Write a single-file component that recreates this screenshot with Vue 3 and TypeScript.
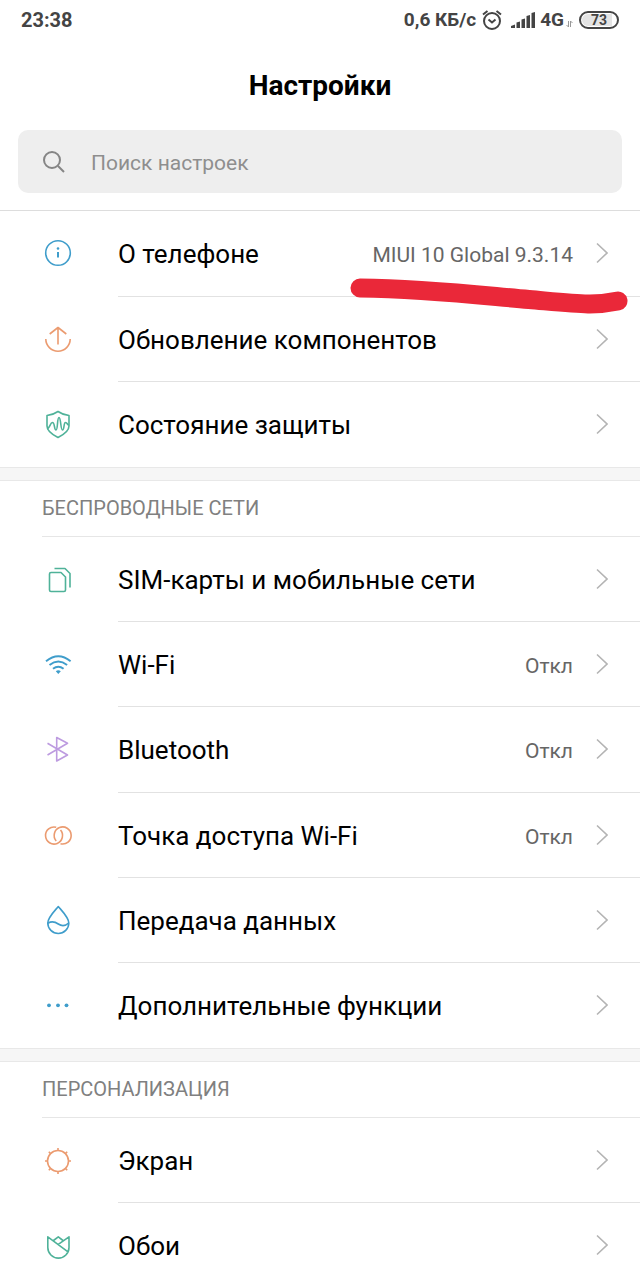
<script setup lang="ts">
type IconName =
  | 'info' | 'update' | 'shield' | 'sim' | 'wifi' | 'bluetooth'
  | 'hotspot' | 'data' | 'more' | 'display' | 'wallpaper'

interface Item {
  icon: IconName
  label: string
  value?: string
  marked?: boolean
}

interface Group {
  id: string
  title?: string
  items: Item[]
}

const groups: Group[] = [
  {
    id: 'device',
    items: [
      { icon: 'info', label: 'О телефоне', value: 'MIUI 10 Global 9.3.14', marked: true },
      { icon: 'update', label: 'Обновление компонентов' },
      { icon: 'shield', label: 'Состояние защиты' },
    ],
  },
  {
    id: 'wireless',
    title: 'БЕСПРОВОДНЫЕ СЕТИ',
    items: [
      { icon: 'sim', label: 'SIM-карты и мобильные сети' },
      { icon: 'wifi', label: 'Wi-Fi', value: 'Откл' },
      { icon: 'bluetooth', label: 'Bluetooth', value: 'Откл' },
      { icon: 'hotspot', label: 'Точка доступа Wi-Fi', value: 'Откл' },
      { icon: 'data', label: 'Передача данных' },
      { icon: 'more', label: 'Дополнительные функции' },
    ],
  },
  {
    id: 'personal',
    title: 'ПЕРСОНАЛИЗАЦИЯ',
    items: [
      { icon: 'display', label: 'Экран' },
      { icon: 'wallpaper', label: 'Обои' },
    ],
  },
]
</script>

<template>
  <div class="screen">
    <div class="status">
      <span class="clock">23:38</span>
      <span class="speed">0,6 КБ/с</span>
      <svg class="alarm" viewBox="0 0 20 22" aria-hidden="true">
        <circle cx="10" cy="12" r="8" />
        <path d="M6.5 10.5 10 13.5 13.5 10.5M1 5.5 5.5 2M19 5.5 14.5 2" />
      </svg>
      <svg class="signal" viewBox="0 0 24 18" aria-hidden="true">
        <path d="M0 17V15L4 13.500V17ZM5.500 17V11.500L9 10.500V17ZM10.500 17V8.500L14 7.500V17ZM15.500 17V5L19 4V17ZM20.500 17V2L24 1V17Z" />
      </svg>
      <span class="net">4G</span>
      <svg class="arrows" viewBox="0 0 7 8" aria-hidden="true">
        <path d="M2.500 1V7L.5 5M4.500 7V1L6.500 3" />
      </svg>
      <span class="battery"><span class="level">73</span></span>
    </div>

    <h1>Настройки</h1>

    <label class="search">
      <svg viewBox="0 0 24 24" aria-hidden="true">
        <circle cx="10" cy="10" r="8" />
        <path d="M16 16 22 22" />
      </svg>
      <input type="search" placeholder="Поиск настроек" aria-label="Поиск настроек">
    </label>

    <main class="list">
      <section v-for="group in groups" :key="group.id" class="group">
        <h2 v-if="group.title">{{ group.title }}</h2>
        <ul>
          <li v-for="item in group.items" :key="item.icon">
            <a href="#" class="row">
              <svg class="icon" :class="item.icon" viewBox="0 0 32 32" aria-hidden="true">
                <template v-if="item.icon === 'info'">
                  <circle cx="16" cy="16" r="12.300" />
                  <path d="M16 15V20.500" stroke-width="2" />
                  <circle class="solid" cx="16" cy="11.500" r="1.300" />
                </template>
                <path v-else-if="item.icon === 'update'" d="M3.800 16A12.200 12.200 0 0 0 28.200 16M16 21.500V4.500M7.700 11 16 4.500 24.300 11" />
                <template v-else-if="item.icon === 'shield'">
                  <path d="M16 3.500C19.500 6 23 7 27 7.500V18C27 23 22 26.500 16 29.500 10 26.500 5 23 5 18V7.500C9 7 12.500 6 16 3.500Z" />
                  <path d="M5 20.500C8 20.500 8 14.500 10.500 14.500S12 22 14 22 15 9.500 17 9.500 18.500 22 20.500 22 21.500 14.500 23.500 14.500 25 17 27 17" />
                </template>
                <template v-else-if="item.icon === 'sim'">
                  <path d="M9 9.500H19L23.500 14V27Q23.500 28.500 22 28.500H9Q7.500 28.500 7.500 27V11Q7.500 9.500 9 9.500Z" />
                  <path d="M12.500 5.500H23L28 10.500V24.500" />
                </template>
                <template v-else-if="item.icon === 'wifi'">
                  <path d="M4 13.300Q16.300 3.300 28.600 13.300M7.500 17Q16.300 10 25.100 17M11 20.800Q16.300 16.500 21.600 20.800" stroke-width="1.900" />
                  <path class="solid" d="M13.800 23.300Q16.300 21.300 18.800 23.300L16.300 26Z" />
                </template>
                <path v-else-if="item.icon === 'bluetooth'" d="M5.500 10.300 25.500 22 14.700 28V4.500L25.500 10.300 5.500 22" />
                <template v-else-if="item.icon === 'hotspot'">
                  <path d="M18.500 11A8.500 8.500 0 1 1 14.200 8.300" />
                  <path d="M14.200 22A8.500 8.500 0 1 1 18.500 24.700" />
                </template>
                <template v-else-if="item.icon === 'data'">
                  <path d="M16.300 2.500C13 6.500 5.800 13.500 5.800 19A10.500 10.500 0 0 0 26.800 19C26.800 13.500 19.600 6.500 16.300 2.500Z" />
                  <path d="M6 19.200C10 16.700 13 17.700 16.300 20S23 22.500 26.700 19" />
                </template>
                <template v-else-if="item.icon === 'more'">
                  <circle class="solid" cx="7" cy="16.300" r="1.900" />
                  <circle class="solid" cx="16" cy="16.300" r="1.900" />
                  <circle class="solid" cx="24.500" cy="16.300" r="1.900" />
                </template>
                <template v-else-if="item.icon === 'display'">
                  <circle cx="16" cy="17" r="10.500" />
                  <path d="M16 6.500V4M16 27.500V30M5.500 17H3M26.500 17H29M8.600 9.600 6.800 7.800M23.400 9.600 25.200 7.800M8.600 24.400 6.800 26.200M23.400 24.400 25.200 26.200" />
                </template>
                <path v-else d="M16.300 15.300 27 7.800V18.500A10.600 10.600 0 0 1 5.800 18.500V7.800L26 22.800M11.500 11.500 16.300 7.800 21 11.500" />
              </svg>
              <span class="label">{{ item.label }}</span>
              <span v-if="item.value" class="value">{{ item.value }}</span>
              <svg class="chevron" viewBox="0 0 12 22" aria-hidden="true">
                <path d="M1 1.500 11 11 1 20.500" />
              </svg>
            </a>
            <svg v-if="item.marked" class="marker" viewBox="0 0 280 38" aria-hidden="true">
              <path d="M11 12C80 13 128 19 180 23.500S245 30 269 25" />
            </svg>
          </li>
        </ul>
      </section>
    </main>
  </div>
</template>

<style>
body {
  margin: 0;
  background: #fff;
}
</style>

<style scoped>
.screen {
  display: flex;
  flex-direction: column;
  height: 100vh;
  overflow: hidden;
  background: #fff;
  color: #000;
  font-family: Roboto, "Noto Sans", sans-serif;
}

svg {
  display: block;
  flex: none;
  fill: none;
  stroke: currentColor;
}

.status {
  display: flex;
  flex: none;
  align-items: center;
  height: 40px;
  padding: 0 21px;
  color: #444;
  font-size: 19px;
  font-weight: 700;
  line-height: 24px;
}

.clock {
  margin-right: auto;
  font-size: 20px;
}

.alarm {
  width: 20px;
  height: 22px;
  margin: 0 9px 0 6px;
  stroke-width: 2;
}

.signal {
  width: 24px;
  height: 18px;
  fill: currentColor;
  stroke: none;
}

.net {
  margin-left: 5px;
}

.arrows {
  align-self: flex-end;
  width: 7px;
  height: 8px;
  margin: 0 6px 12px 2px;
  color: #999;
}

.battery {
  box-sizing: border-box;
  width: 40px;
  height: 18px;
  padding: 1px;
  border: 2px solid #444;
  border-radius: 9px;
}

.level {
  display: block;
  width: 26px;
  padding-left: 4px;
  border-radius: 6px 0 0 6px;
  background: #e4e4e4;
  font-size: 14px;
  line-height: 12px;
  text-align: center;
}

h1 {
  flex: none;
  margin: 0;
  padding-top: 2px;
  font-size: 28px;
  font-weight: 700;
  line-height: 88px;
  text-align: center;
}

.search {
  display: flex;
  flex: none;
  align-items: center;
  height: 63px;
  margin: 0 18px 17px;
  padding: 0 24px;
  border-radius: 10px;
  background: #eee;
  color: #858585;
}

.search svg {
  width: 24px;
  height: 24px;
  margin-right: 25px;
  stroke-width: 2;
}

.search input {
  flex: 1;
  min-width: 0;
  padding: 2px 0 0;
  border: 0;
  outline: 0;
  background: none;
  color: #333;
  font: 21px/30px Roboto, "Noto Sans", sans-serif;
}

.search input::placeholder {
  color: #8e8e8e;
  opacity: 1;
}

.list {
  flex: 1;
  min-height: 0;
  overflow-y: auto;
  border-top: 1px solid #ddd;
  scrollbar-width: none;
}

.group + .group::before {
  content: "";
  display: block;
  height: 12px;
  border: solid #e8e8e8;
  border-width: 1px 0;
  background: #f6f6f6;
}

h2 {
  margin: 0 0 0 42px;
  border-bottom: 1px solid #e6e6e6;
  color: #808080;
  font-size: 20px;
  font-weight: 400;
  line-height: 55px;
}

ul {
  margin: 0;
  padding: 0;
  list-style: none;
}

li {
  position: relative;
}

.row {
  display: flex;
  align-items: center;
  height: 85px;
  padding: 0 32px 0 42px;
  color: inherit;
  text-decoration: none;
}

.group:nth-child(1) li:nth-child(1) .row,
.group:nth-child(2) li:nth-child(3) .row {
  height: 86px;
}

li:not(:last-child)::after {
  content: "";
  position: absolute;
  right: 0;
  bottom: 0;
  left: 118px;
  height: 1px;
  background: #e2e2e2;
}

.icon {
  width: 32px;
  height: 32px;
  margin: 0 44px 2px 0;
  stroke-width: 1.600;
  stroke-linejoin: round;
}

.icon .solid {
  fill: currentColor;
  stroke: none;
}

.info, .wifi, .data, .more {
  color: #3f9dcb;
}

.update, .hotspot, .display {
  color: #eb9b70;
}

.shield, .sim, .wallpaper {
  color: #4fb299;
}

.bluetooth {
  color: #bd9be0;
}

.label {
  flex: 1;
  font-size: 26px;
  line-height: 34px;
}

.value {
  margin-top: 2px;
  color: #666;
  font-size: 21px;
  line-height: 30px;
}

.chevron {
  width: 12px;
  height: 22px;
  margin: 0 0 2px 23px;
  color: #b4b4b4;
  stroke-width: 1.600;
}

.marker {
  position: absolute;
  z-index: 1;
  right: 11px;
  bottom: -17px;
  width: 280px;
  height: 38px;
  color: #ea2839;
  stroke-width: 19;
  stroke-linecap: round;
}
</style>
